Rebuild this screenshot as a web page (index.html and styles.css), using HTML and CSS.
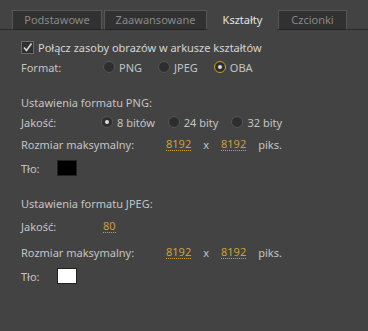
FILE: index.html
```html
<!DOCTYPE html>
<html lang="pl">
<head>
    <meta charset="UTF-8">
    <title>Kształty</title>
    <link rel="stylesheet" href="styles.css">
</head>
<body>
    <div class="panel">
        <div class="tabs">
            <div class="tab t1">Podstawowe</div>
            <div class="tab t2">Zaawansowane</div>
            <div class="tab t3 active">Kształty</div>
            <div class="tab t4">Czcionki</div>
        </div>

        <div class="content">
            <label class="check-row">
                <span class="checkbox checked">
                    <svg width="11" height="11" viewBox="0 0 11 11"><path d="M2 5.5 L4.5 8.5 L9.5 1.5" fill="none" stroke="#d8d8d8" stroke-width="1.6"/></svg>
                </span>
                Połącz zasoby obrazów w arkusze kształtów
            </label>

            <div class="row format">
                <span class="label">Format:</span>
                <span class="radio"><span class="dot"></span>PNG</span>
                <span class="radio"><span class="dot"></span>JPEG</span>
                <span class="radio"><span class="dot on focus"></span>OBA</span>
            </div>

            <div class="section png">
                <div class="heading">Ustawienia formatu PNG:</div>
                <div class="row r1">
                    <span class="label">Jakość:</span>
                    <span class="radio"><span class="dot on"></span>8 bitów</span>
                    <span class="radio"><span class="dot"></span>24 bity</span>
                    <span class="radio"><span class="dot"></span>32 bity</span>
                </div>
                <div class="row r2">
                    <span class="label wide">Rozmiar maksymalny:</span>
                    <span class="value">8192</span>
                    <span class="times">x</span>
                    <span class="value">8192</span>
                    <span class="unit">piks.</span>
                </div>
                <div class="row r3">
                    <span class="label short">Tło:</span>
                    <span class="swatch black"></span>
                </div>
            </div>

            <div class="section jpeg">
                <div class="heading">Ustawienia formatu JPEG:</div>
                <div class="row r1">
                    <span class="label">Jakość:</span>
                    <span class="value">80</span>
                </div>
                <div class="row r2">
                    <span class="label wide">Rozmiar maksymalny:</span>
                    <span class="value">8192</span>
                    <span class="times">x</span>
                    <span class="value">8192</span>
                    <span class="unit">piks.</span>
                </div>
                <div class="row r3">
                    <span class="label short">Tło:</span>
                    <span class="swatch white"></span>
                </div>
            </div>
        </div>
    </div>
</body>
</html>
```

FILE: styles.css
```css
* {
    margin: 0;
    padding: 0;
    box-sizing: border-box;
    font-family: 'Noto Sans', sans-serif;
}

body {
    background: #434343;
    color: #c4c4c4;
    font-size: 11px;
    width: 368px;
    height: 331px;
    overflow: hidden;
}

.panel {
    padding-top: 10px;
}

.tabs {
    display: flex;
    padding-left: 12px;
    border-bottom: 1px solid #2a2a2a;
    height: 20px;
}

.tab {
    height: 20px;
    margin-right: 2px;
    line-height: 17px;
    text-align: center;
    background: #313131;
    color: #888888;
    border: 1px solid #565656;
    border-bottom-color: #222222;
}

.t1 { width: 90px; }
.t2 { width: 103px; margin-right: 1px; }
.t3 { width: 69px; margin-right: 1px; }
.t4 { width: 69px; }

.tab.active {
    background: #434343;
    color: #e2e2e2;
    border-color: #434343;
    height: 21px;
}

.content {
    padding: 9px 0 0 21px;
}

.check-row {
    display: flex;
    align-items: center;
    gap: 4px;
    height: 17px;
    color: #d4d4d4;
}

.checkbox {
    width: 13px;
    height: 13px;
    border: 1px solid #6a6a6a;
    background: #2f2f2f;
    display: flex;
    align-items: center;
    justify-content: center;
}

.row {
    display: flex;
    align-items: center;
    height: 22px;
}

.label {
    width: 82px;
}

.label.wide {
    width: 145px;
}

.label.short {
    width: 36px;
}

.radio {
    display: flex;
    align-items: center;
    gap: 4px;
    margin-right: 13px;
}

.format .radio {
    margin-right: 16px;
}

.dot {
    width: 12px;
    height: 12px;
    border-radius: 50%;
    background: #2e2e2e;
    border: 1px solid #555555;
    display: flex;
    align-items: center;
    justify-content: center;
}

.dot.on::after {
    content: "";
    width: 4px;
    height: 4px;
    border-radius: 50%;
    background: #dcdcdc;
}

.dot.focus {
    border-color: #c9a227;
}

.png .label:first-child {
    width: 80px;
}

.png .label.wide,
.jpeg .label.wide {
    width: 145px;
}

.png .label.short,
.jpeg .label.short {
    width: 36px;
}

.section.png {
    margin-top: 16px;
}

.section.jpeg {
    margin-top: 15px;
}

.heading {
    height: 18px;
    line-height: 18px;
}

.png .r1 { height: 20px; }
.png .r2 { height: 24px; }
.png .r3 { height: 24px; }
.jpeg .r1 { height: 26px; }
.jpeg .r2 { height: 26px; }
.jpeg .r3 { height: 22px; }

.value {
    color: #c9a03a;
    border-bottom: 1px dotted #c9a03a;
    line-height: 13px;
}

.times {
    margin: 0 12px;
}

.unit {
    margin-left: 12px;
}

.swatch {
    width: 20px;
    height: 16px;
    border: 1px solid #222222;
}

.swatch.black {
    background: #000000;
}

.swatch.white {
    background: #ffffff;
}
```
